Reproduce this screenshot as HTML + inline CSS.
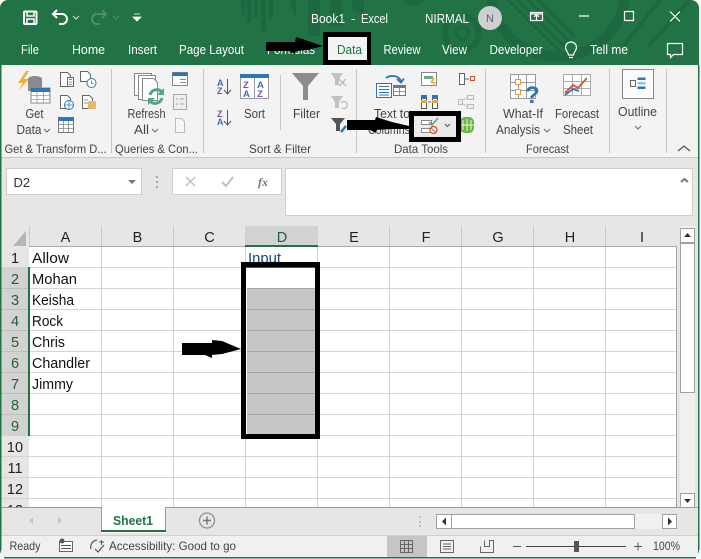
<!DOCTYPE html>
<html><head><meta charset="utf-8"><style>
html,body{margin:0;padding:0;background:#fff;width:701px;height:559px;overflow:hidden}
svg{display:block}
text{font-family:"Liberation Sans",sans-serif}
.t{font-size:12.5px;fill:#fff}
.r{font-size:12.5px;fill:#444}
.g{font-size:12px;fill:#444}
.c{font-size:14.5px;fill:#111}
.h{font-size:14.5px;fill:#222;text-anchor:middle}
.s{font-size:14.5px;fill:#1f5f40;text-anchor:middle}
.st{font-size:12px;fill:#444}
</style></head><body>
<svg width="701" height="559" viewBox="0 0 701 559" xmlns="http://www.w3.org/2000/svg">
<defs><clipPath id="tb"><rect x="0" y="0" width="699" height="65"/></clipPath></defs>
<rect width="701" height="559" fill="#fff"/>
<rect x="0" y="0" width="699" height="558" rx="8" fill="#217346"/>
<g clip-path="url(#tb)" fill="none" stroke="#1d6840">
 <g stroke="none" fill="#1d6840">
 <rect x="241" y="0" width="4" height="15"/><rect x="247" y="0" width="4" height="23"/><rect x="254" y="0" width="4" height="18"/><rect x="261" y="0" width="5" height="32"/><rect x="269" y="0" width="4" height="20"/>
 <path d="M289 0h7v20zM308 0h12v36h-12zM330 0h12v25h-12zM352 0h12v14l-12-4zM402 0h22v3q-11 7-22-3z"/>
 </g>
 <circle cx="462" cy="33" r="17" stroke-width="6"/>
 <circle cx="462" cy="33" r="6" stroke-width="4"/>
 <circle cx="558" cy="-10" r="67" stroke-width="10"/>
 <path d="M505 -3l55 55M515 -3l50 50M525 -3l45 45M535 -3l40 40" stroke-width="3.500"/>
 <path d="M662 -3l-38 48M692 -3l-44 50" stroke-width="4"/>
</g>
<!-- ribbon + body -->
<rect x="1" y="65" width="697" height="92" fill="#f3f3f3"/>
<rect x="1" y="157" width="697" height="1" fill="#c9c9c9"/>
<rect x="1" y="158" width="697" height="378" fill="#e6e6e6"/>
<rect x="1" y="536" width="697" height="21" fill="#f0f0f0"/>
<!-- qat -->
<g fill="none" stroke="#fff" stroke-width="2">
 <rect x="24" y="11.5" width="12.5" height="12.5" rx="1"/>
 <path d="M27 12v4h7v-4M27 24v-5h7v5" stroke-width="1.5"/>
 <path d="M53 14h9a5 5 0 0 1 0 10h-3M57 10l-4 4 4 4"/>
 <path d="M106 14h-9a5 5 0 0 0 0 10h3M102 10l4 4-4 4" stroke="#4f8e6b"/>
</g>
<path d="M73 16l3 3 3-3" fill="none" stroke="#d6e6dc" stroke-width="1"/>
<path d="M113 16l3 3 3-3" fill="none" stroke="#4f8e6b" stroke-width="1"/>
<path d="M134 14h6M133 17h8l-4 4z" fill="#fff" stroke="#fff" stroke-width=".8"/>
<!-- title -->
<text class="t" x="311" y="23" textLength="34" lengthAdjust="spacingAndGlyphs">Book1</text>
<text class="t" x="351" y="23">-</text>
<text class="t" x="361" y="23" textLength="27" lengthAdjust="spacingAndGlyphs">Excel</text>
<text class="t" x="425" y="23" textLength="44" lengthAdjust="spacingAndGlyphs">NIRMAL</text>
<circle cx="490" cy="18" r="12" fill="#cfcfcf"/>
<text x="490" y="22" font-size="11" fill="#5b5b7a" text-anchor="middle">N</text>
<g fill="none" stroke="#fff" stroke-width="1.2">
 <rect x="530.5" y="12.5" width="12" height="8"/><path d="M530 14h13M536.500 20v-5M534 17l2.500-2.500 2.500 2.500"/>
 <path d="M579 16h10"/>
 <rect x="624.500" y="11.500" width="9" height="9"/>
 <path d="M670 11.500l10 10M680 11.500l-10 10"/>
</g>
<!-- tabs -->
<text class="t" x="21" y="54" textLength="18" lengthAdjust="spacingAndGlyphs">File</text>
<text class="t" x="72" y="54" textLength="33" lengthAdjust="spacingAndGlyphs">Home</text>
<text class="t" x="128" y="54" textLength="29" lengthAdjust="spacingAndGlyphs">Insert</text>
<text class="t" x="179" y="54" textLength="65" lengthAdjust="spacingAndGlyphs">Page Layout</text>
<text class="t" x="267" y="54" textLength="48" lengthAdjust="spacingAndGlyphs">Formulas</text>
<text class="t" x="383.500" y="54" textLength="37" lengthAdjust="spacingAndGlyphs">Review</text>
<text class="t" x="442" y="54" textLength="25" lengthAdjust="spacingAndGlyphs">View</text>
<text class="t" x="489.500" y="54" textLength="53" lengthAdjust="spacingAndGlyphs">Developer</text>
<text class="t" x="590" y="54" textLength="38" lengthAdjust="spacingAndGlyphs">Tell me</text>
<g fill="none" stroke="#fff" stroke-width="1.2">
 <path d="M568.500 55c0-3-3-4-3-7.500a5.500 5.500 0 0 1 11 0c0 3.500-3 4.500-3 7.500zM569 57.500h4"/>
 <path d="M667.500 43.500h15v11h-9l-3 3v-3h-3z"/>
</g>
<!-- Data tab box -->
<rect x="323" y="32" width="48" height="33" fill="#000"/>
<rect x="328" y="37" width="39" height="23" fill="#f3f3f3"/>
<text x="337" y="54" font-size="12.500" fill="#217346" textLength="25" lengthAdjust="spacingAndGlyphs">Data</text>
<path d="M266 42h29l1-5 12 4 15 5-15 4-12 1-1 3-6-3h-23z" fill="#000"/>
<!-- ribbon separators -->
<g fill="#c6c6c6">
 <rect x="111" y="69" width="1" height="84"/><rect x="203" y="69" width="1" height="84"/><rect x="356" y="69" width="1" height="84"/><rect x="485" y="69" width="1" height="84"/><rect x="609" y="69" width="1" height="84"/><rect x="666" y="69" width="1" height="84"/>
 <rect x="280" y="75" width="1" height="55"/>
</g>
<!-- Get data icons -->
<path d="M26 71l-8 12h5l-5 8 11-12h-5l5-8z" fill="#f0b03c"/>
<ellipse cx="35" cy="79" rx="7" ry="3" fill="#8a8a8a"/><rect x="28" y="79" width="14" height="12" fill="#8a8a8a"/>
<rect x="31" y="88" width="19" height="15" fill="#fff" stroke="#888"/><rect x="31" y="88" width="19" height="4" fill="#2f75b5"/>
<path d="M31 95.500h19M31 99.500h19M37 92v11M43.500 92v11" stroke="#999" stroke-width=".8"/>
<g fill="#fff" stroke="#666">
 <path d="M60.500 72.500h7l3 3v11h-10z"/><rect x="67.500" y="77.500" width="6" height="9"/>
 <path d="M80.500 71.500h7l3 3v7h-10z"/>
 <path d="M60.500 95.500h7l3 3v10h-10z"/>
 <path d="M82.500 95.500h7l3 3v10h-10z"/>
 <circle cx="91.500" cy="83" r="4.500" stroke="#2f75b5"/><circle cx="69" cy="105" r="4.500" stroke="#2f75b5"/>
</g>
<path d="M64.500 105h9M69 100.500v9M91.500 80.500v3h2" fill="none" stroke="#2f75b5" stroke-width=".8"/>
<path d="M69 79.500h3M69 82h3M69 84.500h3M84 100h4M84 103h4" stroke="#666" stroke-width=".8"/>
<rect x="88" y="101" width="8" height="8" rx="1.500" fill="#e9b86a"/>
<rect x="58.500" y="117.500" width="15" height="15" fill="#fff" stroke="#777"/><rect x="58.500" y="117.500" width="15" height="3.500" fill="#2f75b5"/>
<path d="M58 124.500h15M58 128.500h15M63.500 121v11M68.500 121v11" stroke="#888" stroke-width=".8"/>
<text class="r" x="25.500" y="118" textLength="18" lengthAdjust="spacingAndGlyphs">Get</text>
<text class="r" x="16.500" y="134" textLength="25" lengthAdjust="spacingAndGlyphs">Data</text>
<path d="M44 129l3 3 3-3" fill="none" stroke="#666"/>
<text class="g" x="4.500" y="153" textLength="102" lengthAdjust="spacingAndGlyphs">Get &amp; Transform D...</text>
<!-- Refresh -->
<g fill="#fff" stroke="#888"><rect x="134.500" y="73.500" width="17" height="22"/><rect x="138.500" y="75.500" width="17" height="24"/><path d="M142.500 78.500h11l4 4v18h-15z"/></g>
<path d="M150 95a7 7 0 0 1 12-3M162 98a7 7 0 0 1-12 3" fill="none" stroke="#55a58a" stroke-width="3"/>
<path d="M164 88v7h-7zM148 105v-7h7z" fill="#55a58a"/>
<rect x="172.500" y="72.500" width="15" height="13" fill="#fff" stroke="#888"/><rect x="172.500" y="72.500" width="15" height="3.500" fill="#2f75b5"/>
<path d="M180 79.500h6M180 82.500h6" stroke="#888"/>
<rect x="173.500" y="94.500" width="13" height="15" fill="#eee" stroke="#aaa"/>
<path d="M176 99h2M180 99h4M176 104h2M180 104h4" stroke="#aaa"/>
<path d="M175.500 118.500h6l3 3v11h-9z" fill="#f7f7f7" stroke="#bbb"/>
<text class="r" x="127.500" y="118" textLength="38" lengthAdjust="spacingAndGlyphs">Refresh</text>
<text class="r" x="134" y="134" textLength="15" lengthAdjust="spacingAndGlyphs">All</text>
<path d="M152 129l3 3 3-3" fill="none" stroke="#666"/>
<text class="g" x="115" y="153" textLength="83" lengthAdjust="spacingAndGlyphs">Queries &amp; Con...</text>
<!-- Sort -->
<text x="217" y="86" font-size="9" font-weight="bold" fill="#2f75b5">A</text><text x="217" y="94" font-size="9" font-weight="bold" fill="#8a4fb0">Z</text>
<text x="217" y="117" font-size="9" font-weight="bold" fill="#8a4fb0">Z</text><text x="217" y="125" font-size="9" font-weight="bold" fill="#2f75b5">A</text>
<path d="M227.500 79v14M224 90l3.500 4 3.500-4M227.500 110v14M224 121l3.500 4 3.500-4" fill="none" stroke="#555"/>
<rect x="240.500" y="74.500" width="28" height="24" fill="#fff" stroke="#999"/><rect x="240" y="74" width="29" height="4" fill="#2f75b5"/><path d="M254.500 78v20" stroke="#999"/>
<text x="243" y="88" font-size="9.500" font-weight="bold" fill="#8a4fb0">Z</text><text x="243" y="97" font-size="9.500" font-weight="bold" fill="#2f75b5">A</text>
<text x="257" y="88" font-size="9.500" font-weight="bold" fill="#2f75b5">A</text><text x="257" y="97" font-size="9.500" font-weight="bold" fill="#8a4fb0">Z</text>
<text class="r" x="244" y="118" textLength="21" lengthAdjust="spacingAndGlyphs">Sort</text>
<path d="M292 73h27l-11 13v14h-5v-14z" fill="#8c8c8c"/>
<text class="r" x="293" y="118" textLength="27" lengthAdjust="spacingAndGlyphs">Filter</text>
<path d="M331 73h12l-4 6v6h-4v-6zM331 96h12l-4 6v6h-4v-6z" fill="#c2c2c2"/>
<path d="M339 79l7 7M346 79l-7 7" stroke="#bbb" stroke-width="1.300"/>
<path d="M341 103a3.500 3.500 0 1 1 1 5" fill="none" stroke="#bbb" stroke-width="1.300"/>
<path d="M331 118h14l-5 6v7h-4v-7z" fill="#555"/>
<path d="M341 132l5-6" stroke="#2f75b5" stroke-width="2.500"/>
<text class="g" x="249" y="153" textLength="62" lengthAdjust="spacingAndGlyphs">Sort &amp; Filter</text>
<!-- Data tools -->
<rect x="376.500" y="83.500" width="15" height="14" fill="#fff" stroke="#2f75b5"/>
<path d="M379 86.500h10M379 89.500h10M379 92.500h10M379 95h10" stroke="#2f75b5"/>
<rect x="393.500" y="85.500" width="12" height="10" fill="#fff" stroke="#777"/><rect x="393" y="85" width="13" height="3" fill="#777"/><path d="M399.500 88v8M393 91.500h13" stroke="#777" stroke-width=".8"/>
<path d="M386 78a9 7 0 0 1 15 3M397 79l4 3.500 3-4" fill="none" stroke="#2f75b5" stroke-width="1.800"/>
<text class="r" x="374" y="118" textLength="36" lengthAdjust="spacingAndGlyphs">Text to</text>
<text class="r" x="368" y="134" textLength="42" lengthAdjust="spacingAndGlyphs">Columns</text>
<rect x="421.500" y="72.500" width="15" height="13" fill="#fff" stroke="#888"/><rect x="424" y="76" width="9" height="3" fill="#6aa98a"/><path d="M433 78l-3 5h3l-2 5 5-6h-3l2-4z" fill="#f0b03c"/>
<rect x="421.500" y="95.500" width="5" height="13" fill="#fff" stroke="#555"/><rect x="432.500" y="95.500" width="5" height="13" fill="#fff" stroke="#555"/><rect x="421" y="95" width="6" height="4" fill="#2f75b5"/><rect x="432" y="95" width="6" height="4" fill="#2f75b5"/><rect x="421" y="100" width="6" height="3" fill="#e6a83c"/><rect x="432" y="100" width="6" height="3" fill="#e6a83c"/><path d="M428 102h3" stroke="#2f75b5"/>
<rect x="459.500" y="73.500" width="5" height="11" fill="#fff" stroke="#666"/><path d="M465 79h4" stroke="#2f75b5"/><rect x="470.500" y="76.500" width="4" height="4" fill="#fff" stroke="#d0502c"/>
<path d="M460 102l8-5M460 102l8 5" stroke="#bbb"/><rect x="458.500" y="99.500" width="4" height="5" fill="#eee" stroke="#bbb"/><rect x="467.500" y="95.500" width="6" height="4" fill="#eee" stroke="#bbb"/><rect x="467.500" y="104.500" width="6" height="4" fill="#eee" stroke="#bbb"/>
<rect x="460" y="117" width="14" height="16" rx="5" fill="#6bb644"/><path d="M463 120v10M467 119v12M471 120v10M460 125h14" stroke="#e8f5dd" stroke-width="1"/>
<text class="g" x="394" y="153" textLength="54" lengthAdjust="spacingAndGlyphs">Data Tools</text>
<!-- DV box -->
<rect x="409" y="111" width="52" height="31" fill="#000"/>
<rect x="414" y="116" width="42" height="21" fill="#ebebeb"/>
<rect x="421.500" y="120.500" width="10" height="4" fill="#fff" stroke="#888"/><rect x="421.500" y="128.500" width="10" height="4" fill="#fff" stroke="#888"/>
<path d="M429 122l3 3 6-7" fill="none" stroke="#58a38a" stroke-width="1.500"/>
<circle cx="433.500" cy="130" r="3.500" fill="#fff" stroke="#d0502c" stroke-width="1.300"/><path d="M431 128l5 5" stroke="#d0502c"/>
<path d="M445 124l2.500 2.500 2.500-2.500" fill="none" stroke="#555"/>
<path d="M347 120h28l1-3 16 5 17 4v3h-18l-15 1v3l-6-3h-23z" fill="#000"/>
<!-- what if -->
<g stroke="#999" fill="#fff"><rect x="510.500" y="74.500" width="25" height="24"/><path d="M510 82.500h25M510 90.500h25M518.500 74v24M526.500 74v24" fill="none"/></g>
<rect x="515.500" y="79.500" width="5" height="5" fill="#fff" stroke="#e09a3c"/><rect x="515.500" y="89.500" width="5" height="5" fill="#fff" stroke="#e09a3c"/>
<text x="525" y="103" font-size="24" font-weight="bold" fill="#2f75b5">?</text>
<text class="r" x="503" y="118" textLength="40" lengthAdjust="spacingAndGlyphs">What-If</text>
<text class="r" x="496" y="134" textLength="44" lengthAdjust="spacingAndGlyphs">Analysis</text>
<path d="M544 129l3 3 3-3" fill="none" stroke="#666"/>
<g stroke="#aaa" fill="#fff"><path d="M563.500 74.500h27v21h-27z"/><path d="M563 81.500h27M563 88.500h27M572.500 74v21M581.500 74v21" fill="none"/></g>
<path d="M565 93l8-8 5 3 9-10" fill="none" stroke="#d0542c" stroke-width="1.800"/><path d="M565 95l8-6 6 2" fill="none" stroke="#2f75b5" stroke-width="1.800"/>
<text class="r" x="555" y="118" textLength="44" lengthAdjust="spacingAndGlyphs">Forecast</text>
<text class="r" x="563" y="134" textLength="30" lengthAdjust="spacingAndGlyphs">Sheet</text>
<text class="g" x="526" y="153" textLength="43" lengthAdjust="spacingAndGlyphs">Forecast</text>
<!-- outline -->
<rect x="622.500" y="69.500" width="31" height="29" fill="#fbfbfb" stroke="#888"/>
<rect x="630.500" y="80.500" width="5" height="6" fill="#fff" stroke="#666"/><rect x="637.500" y="77.500" width="8" height="2.500" fill="#2f75b5"/><rect x="637.500" y="82" width="8" height="2.500" fill="#9ac0df"/><rect x="637.500" y="86.500" width="8" height="2.500" fill="#2f75b5"/>
<text class="r" x="618" y="116" textLength="39" lengthAdjust="spacingAndGlyphs">Outline</text>
<path d="M635 126l3 3 3-3" fill="none" stroke="#666"/>
<path d="M678 151l6-5 6 5" fill="none" stroke="#555" stroke-width="1.200"/>
<!-- formula bar -->
<rect x="6.500" y="168.500" width="135" height="26" fill="#fff" stroke="#cfcfcf"/>
<text x="13.500" y="187" font-size="13" fill="#333">D2</text>
<path d="M128 180h8l-4 4z" fill="#777"/>
<g fill="#aaa"><rect x="156" y="176" width="2" height="2"/><rect x="156" y="181" width="2" height="2"/><rect x="156" y="186" width="2" height="2"/></g>
<rect x="172.500" y="168.500" width="109" height="26" fill="#fff" stroke="#cfcfcf"/>
<path d="M186 177l9 9M195 177l-9 9" stroke="#c0c0c0" stroke-width="1.500"/>
<path d="M222 182l4 4 7-9" fill="none" stroke="#c0c0c0" stroke-width="2"/>
<text x="258" y="186" font-size="12" font-style="italic" font-weight="bold" fill="#777" style="font-family:'Liberation Serif',serif">fx</text>
<rect x="285.500" y="168.500" width="407" height="47" fill="#fff" stroke="#cfcfcf"/>
<path d="M681 182l3.500-3 3.500 3" fill="none" stroke="#777" stroke-width="2"/>
<!-- grid -->
<rect x="29" y="246" width="647" height="261" fill="#fff"/>
<g stroke="#d4d4d4" stroke-width="1">
 <path d="M29 267.500h647M29 288.500h647M29 309.500h647M29 330.500h647M29 351.500h647M29 372.500h647M29 393.500h647M29 414.500h647M29 435.500h647M29 456.500h647M29 477.500h647M29 498.500h647"/>
 <path d="M101.500 246v261M173.500 246v261M245.500 246v261M317.500 246v261M389.500 246v261M461.500 246v261M533.500 246v261M605.500 246v261"/>
 <path d="M1 267.500h28M1 288.500h28M1 309.500h28M1 330.500h28M1 351.500h28M1 372.500h28M1 393.500h28M1 414.500h28M1 435.500h28M1 456.500h28M1 477.500h28M1 498.500h28"/>
</g>
<rect x="1" y="267" width="27" height="168" fill="#d2d2d2"/>
<path d="M1 288.500h27M1 309.500h27M1 330.500h27M1 351.500h27M1 372.500h27M1 393.500h27M1 414.500h27" stroke="#bdbdbd"/>
<rect x="28" y="267" width="2" height="169" fill="#217346"/>
<path d="M29.500 226v20M101.500 226v20M173.500 226v20M245.500 226v20M317.500 226v20M389.500 226v20M461.500 226v20M533.500 226v20M605.500 226v20" stroke="#c8c8c8"/>
<rect x="245" y="226" width="73" height="19" fill="#d2d2d2"/><rect x="245" y="245" width="73" height="2" fill="#217346"/>
<path d="M26 231v15h-13z" fill="#b5b5b5"/>
<path d="M29 246.500h216M318 246.500h358" stroke="#aaa" stroke-width="1"/>
<rect x="676" y="246" width="1" height="261" fill="#a0a0a0"/>
<text class="h" x="65.500" y="242">A</text><text class="h" x="137.500" y="242">B</text><text class="h" x="209.500" y="242">C</text><text class="s" x="282" y="242">D</text><text class="h" x="354" y="242">E</text><text class="h" x="426" y="242">F</text><text class="h" x="498" y="242">G</text><text class="h" x="570" y="242">H</text><text class="h" x="642" y="242">I</text>
<text class="h" x="15" y="263">1</text><text class="s" x="15" y="284">2</text><text class="s" x="15" y="305">3</text><text class="s" x="15" y="326">4</text><text class="s" x="15" y="347">5</text><text class="s" x="15" y="368">6</text><text class="s" x="15" y="389">7</text><text class="s" x="15" y="410">8</text><text class="s" x="15" y="431">9</text><text class="h" x="15" y="473">11</text><text class="h" x="15" y="452">10</text><text class="h" x="15" y="494">12</text>
<clipPath id="r13"><rect x="1" y="499" width="28" height="8"/></clipPath>
<text class="h" x="15" y="515" clip-path="url(#r13)">13</text>
<text class="c" x="32" y="263" textLength="37" lengthAdjust="spacingAndGlyphs">Allow</text>
<text class="c" x="32" y="284" textLength="45" lengthAdjust="spacingAndGlyphs">Mohan</text>
<text class="c" x="32" y="305" textLength="42" lengthAdjust="spacingAndGlyphs">Keisha</text>
<text class="c" x="32" y="326" textLength="31" lengthAdjust="spacingAndGlyphs">Rock</text>
<text class="c" x="32" y="347" textLength="33" lengthAdjust="spacingAndGlyphs">Chris</text>
<text class="c" x="32" y="368" textLength="58" lengthAdjust="spacingAndGlyphs">Chandler</text>
<text class="c" x="32" y="389" textLength="41" lengthAdjust="spacingAndGlyphs">Jimmy</text>
<text x="248" y="263" font-size="14.500" fill="#11497f" textLength="33" lengthAdjust="spacingAndGlyphs">Input</text>
<!-- D box -->
<rect x="241" y="262" width="79" height="177" fill="#000"/>
<rect x="246" y="267" width="69" height="21" fill="#fff"/>
<rect x="246" y="267" width="69" height="1" fill="#217346"/>
<rect x="247" y="288" width="68" height="146" fill="#c6c6c6"/>
<rect x="246" y="288" width="1" height="146" fill="#fff"/>
<path d="M247 288.500h68M247 309.500h68M247 330.500h68M247 351.500h68M247 372.500h68M247 393.500h68M247 414.500h68" stroke="#a6a6a6"/>
<path d="M182 343h30v-3l10 1 19 8-19 5-10 1v3l-7-3h-23z" fill="#000"/>
<!-- vscroll -->
<rect x="680" y="226" width="15" height="281" fill="#f0f0f0"/>
<rect x="680.500" y="228.500" width="14" height="14" fill="#fff" stroke="#a0a0a0"/>
<path d="M684 237h7l-3.500-4z" fill="#333"/>
<rect x="680.500" y="243.500" width="14" height="149" fill="#fff" stroke="#a0a0a0"/>
<rect x="680.500" y="493.500" width="14" height="14" fill="#fff" stroke="#a0a0a0"/>
<path d="M684 499h7l-3.500 4z" fill="#333"/>
<!-- sheet bar -->
<rect x="1" y="507" width="697" height="1" fill="#9c9c9c"/>
<rect x="101" y="507" width="65" height="26" fill="#fff"/>
<path d="M101.500 507v24M165.500 507v24" stroke="#9c9c9c"/>
<rect x="101" y="530" width="65" height="2" fill="#217346"/>
<text x="113" y="525" font-size="12.500" font-weight="bold" fill="#217346" textLength="40" lengthAdjust="spacingAndGlyphs">Sheet1</text>
<path d="M33 517v7l-4-3.500zM58 517v7l4-3.500z" fill="#c4c4c4"/>
<circle cx="207" cy="520.500" r="7.500" fill="none" stroke="#8e8e8e" stroke-width="1.300"/>
<path d="M203 520.500h8M207 516.500v8" stroke="#777" stroke-width="1.500"/>
<g fill="#c0c0c0"><rect x="419" y="516" width="2" height="2"/><rect x="419" y="521" width="2" height="2"/><rect x="419" y="525" width="2" height="2"/></g>
<rect x="436" y="514" width="241" height="15" fill="#f0f0f0"/>
<rect x="436.500" y="514.500" width="15" height="14" fill="#fff" stroke="#a0a0a0"/>
<path d="M446 517.500v8l-4-4z" fill="#333"/>
<rect x="451.500" y="514.500" width="183" height="14" fill="#fff" stroke="#a0a0a0"/>
<rect x="662.500" y="514.500" width="14" height="14" fill="#fff" stroke="#a0a0a0"/>
<path d="M668 517.500v8l4-4z" fill="#333"/>
<!-- status -->
<rect x="1" y="535" width="697" height="1" fill="#cfcfcf"/>
<text class="st" x="9.500" y="550" textLength="31" lengthAdjust="spacingAndGlyphs">Ready</text>
<path d="M59.500 541.500h13v10h-13z" fill="#fff" stroke="#666"/><circle cx="62" cy="541" r="2.500" fill="#555"/><rect x="61" y="545" width="10" height="1" fill="#555"/><rect x="61" y="548" width="10" height="1" fill="#555"/>
<path d="M97 540a7 7 0 0 0-6 9M95 549l3 3 6-7" fill="none" stroke="#555" stroke-width="1.200"/><path d="M99 542h5M101.500 540v5" stroke="#555"/>
<text class="st" x="109" y="550" textLength="127" lengthAdjust="spacingAndGlyphs">Accessibility: Good to go</text>
<rect x="387" y="536" width="40" height="21" fill="#c6c6c6"/>
<g fill="none" stroke="#666">
 <path d="M400.500 540.500h12v12h-12zM400 544.500h13M400 548.500h13M404.500 540v13M408.500 540v13"/>
 <rect x="440.500" y="540.500" width="13" height="12"/><path d="M443 544h8M443 546.500h8M443 549h8"/>
 <path d="M480.500 546.500v6h13v-12h-4v6h-5v-6"/>
 <path d="M513 546.500h8M634 546.500h8M638 542.500v8" stroke="#555"/>
</g>
<rect x="526" y="546" width="100" height="1" fill="#444"/>
<rect x="574" y="541" width="5" height="11" fill="#555"/>
<text class="st" x="653" y="550" textLength="27" lengthAdjust="spacingAndGlyphs">100%</text>
<!-- window edges -->
<rect x="0" y="65" width="1.500" height="485" fill="#217346"/>
<rect x="698" y="65" width="1.500" height="485" fill="#217346"/>
<rect x="4" y="557" width="692" height="1.500" fill="#217346"/>
</svg>
</body></html>
